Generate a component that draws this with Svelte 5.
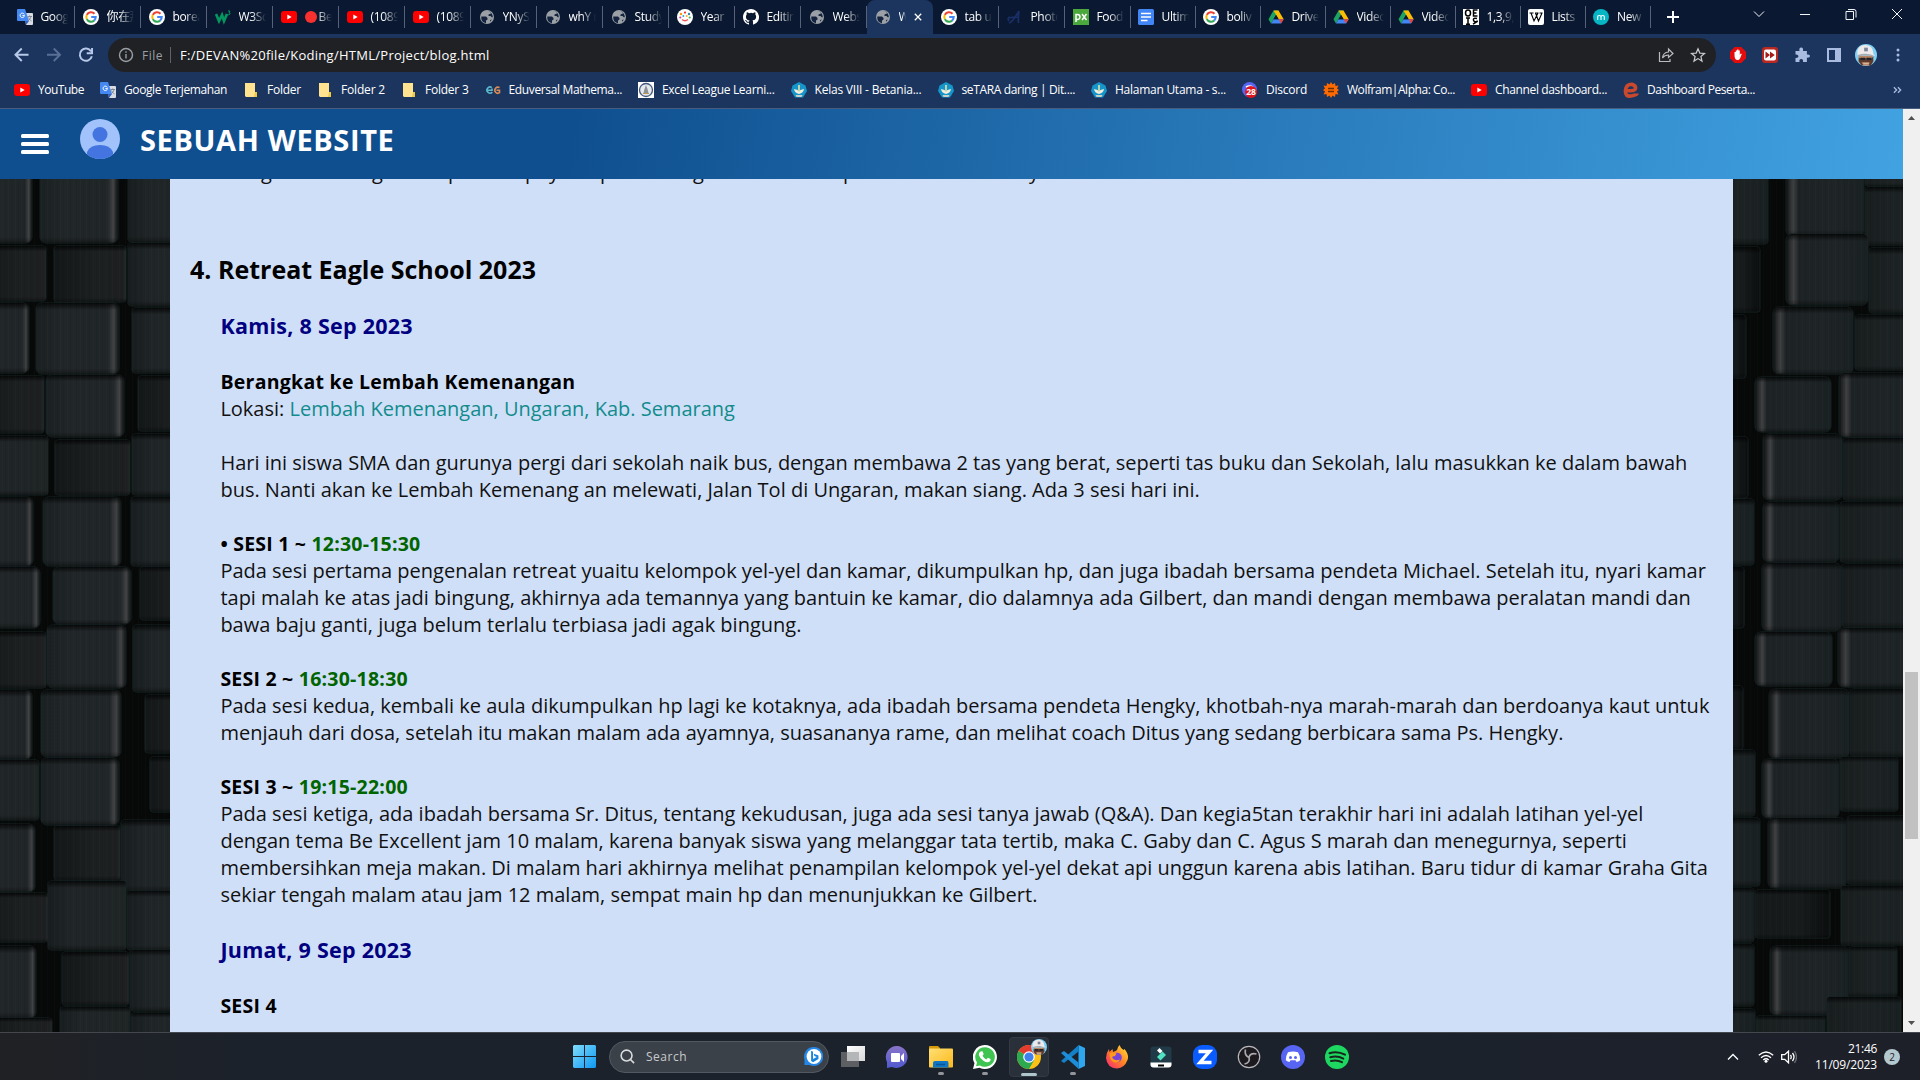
<script>
  // Spreads the letters of a line so that it spans the given width.
  function fit(node, width) {
    const natural = node.getBoundingClientRect().width;
    const count = node.textContent.length;
    if (width && count) node.style.letterSpacing = `${(width - natural) / count}px`;
  }

  const tabs = [
    ['translate', 'Google', 74.5], ['google', '你在那', 66], ['google', 'borea', 66], ['w3', 'W3Sch', 66],
    ['youtube', 'Be', 66, false, true], ['youtube', '(1089)', 66], ['youtube', '(1089)', 66], ['globe', 'YNySo', 66],
    ['globe', 'whY n', 66], ['globe', 'Study', 66], ['year', 'Year 2', 66], ['github', 'Editin', 66],
    ['globe', 'Webs', 66], ['globe', 'We', 66, true], ['google', 'tab un', 66], ['fontA', 'Photo', 66],
    ['px', 'Food', 66], ['docs', 'Ultim', 65], ['google', 'boliv', 65], ['drive', 'Drive', 65],
    ['drive', 'Video', 65], ['drive', 'Video', 65], ['oeis', '1,3,9,', 65], ['wiki', 'Lists', 65], ['m', 'New', 65.5]
  ];

  const bookmarks = [
    ['youtube', 'YouTube', 46], ['translate', 'Google Terjemahan', 103], ['folder', 'Folder', 34],
    ['folder', 'Folder 2', 44], ['folder', 'Folder 3', 43.5], ['edu', 'Eduversal Mathema...', 113.5],
    ['excel', 'Excel League Learni...', 112.5], ['tut', 'Kelas VIII - Betania...', 107],
    ['tut', 'seTARA daring | Dit....', 113.5], ['tut', 'Halaman Utama - s...', 111],
    ['disc28', 'Discord', 41], ['wolfram', 'Wolfram|Alpha: Co...', 108],
    ['youtube', 'Channel dashboard...', 112], ['e', 'Dashboard Peserta...', 108]
  ];

  // Letters of the line that scrolls under the header: [glyph, box width]
  const cut = [['', 41], ['g', 111], ['g', 76], ['p', 77], ['p', 24], ['y', 51], ['p', 93], ['g', 150], ['p', 186], ['y', 20]];

  const sessions = [
    { label: '• SESI 1 ~ ', time: '12:30-15:30', width: 200, lines: [
      ['Pada sesi pertama pengenalan retreat yuaitu kelompok yel-yel dan kamar, dikumpulkan hp, dan juga ibadah bersama pendeta Michael. Setelah itu, nyari kamar', 1485.5],
      ['tapi malah ke atas jadi bingung, akhirnya ada temannya yang bantuin ke kamar, dio dalamnya ada Gilbert, dan mandi dengan membawa peralatan mandi dan', 1470.5],
      ['bawa baju ganti, juga belum terlalu terbiasa jadi agak bingung.', 581]
    ] },
    { label: 'SESI 2 ~ ', time: '16:30-18:30', width: 187.5, lines: [
      ['Pada sesi kedua, kembali ke aula dikumpulkan hp lagi ke kotaknya, ada ibadah bersama pendeta Hengky, khotbah-nya marah-marah dan berdoanya kaut untuk', 1489],
      ['menjauh dari dosa, setelah itu makan malam ada ayamnya, suasananya rame, dan melihat coach Ditus yang sedang berbicara sama Ps. Hengky.', 1343]
    ] },
    { label: 'SESI 3 ~ ', time: '19:15-22:00', width: 187.5, lines: [
      ['Pada sesi ketiga, ada ibadah bersama Sr. Ditus, tentang kekudusan, juga ada sesi tanya jawab (Q&A). Dan kegia5tan terakhir hari ini adalah latihan yel-yel', 1423],
      ['dengan tema Be Excellent jam 10 malam, karena banyak siswa yang melanggar tata tertib, maka C. Gaby dan C. Agus S marah dan menegurnya, seperti', 1406.5],
      ['membersihkan meja makan. Di malam hari akhirnya melihat penampilan kelompok yel-yel dekat api unggun karena abis latihan. Baru tidur di kamar Graha Gita', 1487.5],
      ['sekiar tengah malam atau jam 12 malam, sempat main hp dan menunjukkan ke Gilbert.', 817]
    ] }
  ];

  // Background blocks: [left, right, top, bottom, look]; b bright, n plain, d dim
  const leftBlocks = [
    [-20,32,170,243,'b'],[40,118,170,243,'b'],[128,200,170,242,'n'],
    [-20,46,246,301,'d'],[54,126,246,302,'d'],[128,200,243,306,'n'],
    [-20,29,303,373,'b'],[132,200,308,373,'n'],[36,119,303,374,'b'],
    [-20,44,376,433,'d'],[138,200,376,431,'d'],[46,124,375,437,'b'],
    [-20,48,436,495,'n'],[55,130,440,495,'d'],[132,200,434,495,'n'],
    [-20,33,497,566,'b'],[43,121,497,566,'b'],[131,200,497,566,'n'],
    [-20,40,567,628,'b'],[53,131,567,624,'b'],[140,200,567,620,'d'],
    [-20,46,632,688,'d'],[47,126,625,688,'b'],[133,200,625,692,'n'],
    [-20,32,690,759,'b'],[145,200,695,753,'d'],[41,121,690,757,'b'],
    [-20,39,760,820,'n'],[150,200,757,812,'d'],[41,119,758,825,'b'],
    [-20,35,824,892,'b'],[54,120,826,880,'d'],[121,200,820,891,'n'],
    [-20,48,893,942,'d'],[48,126,881,950,'n'],[127,200,891,950,'n'],
    [-20,36,946,1018,'b'],[62,129,952,1005,'d'],[130,200,950,1011,'n'],
    [-20,52,1018,1060,'d'],[60,130,1007,1060,'n'],[131,200,1013,1060,'n']
  ];
  const rightBlocks = [
    [1715,1768,160,244,'n'],[1786,1864,160,236,'b'],[1865,1920,150,186,'n'],[1865,1920,187,245,'n'],
    [1715,1760,247,312,'d'],[1869,1920,248,313,'n'],[1786,1868,234,305,'b'],
    [1715,1746,315,378,'d'],[1855,1920,315,370,'n'],[1773,1853,307,374,'b'],
    [1755,1831,377,432,'b'],[1839,1920,373,437,'b'],
    [1715,1748,437,498,'d'],[1843,1920,438,500,'n'],[1763,1842,434,500,'b'],
    [1715,1754,499,565,'n'],[1840,1920,502,562,'n'],[1763,1839,502,562,'b'],
    [1715,1744,567,628,'d'],[1842,1920,564,627,'n'],[1762,1841,563,631,'b'],
    [1755,1832,632,686,'b'],[1838,1920,628,687,'b'],
    [1715,1743,686,750,'d'],[1850,1920,689,756,'n'],[1769,1849,689,758,'b'],
    [1715,1755,750,816,'n'],[1840,1898,757,811,'n'],[1762,1839,759,818,'b'],
    [1715,1760,818,886,'n'],[1847,1920,816,884,'n'],[1768,1846,818,888,'b'],
    [1715,1754,888,942,'n'],[1755,1830,890,938,'d'],[1841,1920,886,945,'n'],
    [1715,1754,944,1006,'n'],[1849,1897,947,996,'n'],[1770,1848,946,1015,'b'],
    [1715,1755,1009,1060,'n'],[1756,1825,1016,1060,'n'],[1827,1901,997,1060,'n']
  ];

  const apps = [
    ['taskview'], ['chat'], ['explorer', 'dot'], ['whatsapp', 'dot'], ['chrome', 'active'], ['vscode', 'dot'],
    ['firefox'], ['filmora'], ['zapp'], ['obs'], ['discord'], ['spotify']
  ];
</script>

{#snippet face()}
  <circle cx="12" cy="12" r="12" fill="#7fd0f5" />
  <path d="M4 13h15l1 6-4 4.500H8L4 19z" fill="#b98463" />
  <path d="M4 12v7l3 4h2l-2-3h9l-1 3.500h2l3-4.500v-6l-2 3-5-1-4 1-5-1z" fill="#5b3a2c" />
  <path d="M3 13C1 6 5 1 11 1s9 4 9 10l2 2-9-1z" fill="#eceaea" />
  <path d="M3 12c6-2 12-2 18 1v1c-6-2-12-2-18 0z" fill="#a9a9ae" />
  <rect x="10" y="4" width="4" height="4" fill="#7d8299" />
  <path d="M6 15h5v2.500H6zM13 15h5v2.500h-5z" fill="#20242e" />
  <path d="M9 20.500h6V22H9z" fill="#d7b59c" />
{/snippet}

{#snippet icon(name)}
  {#if name === 'translate'}
    <svg class="i16" viewBox="0 0 16 16"><path d="M7 4h8a1 1 0 0 1 1 1v10a1 1 0 0 1-1 1H9z" fill="#d9dde3" /><path d="M1 0h7l4 12H1a1 1 0 0 1-1-1V1a1 1 0 0 1 1-1z" fill="#4688f1" /><path d="M8 12h4l-3 4z" fill="#3162c4" /><path d="M7.3 5.400a2.200 2.200 0 1 0 .2 1.200H5.400" fill="none" stroke="#fff" stroke-width="1" /><path d="M10.500 7.500H15M12.700 6.500v1M14 7.500c-.5 2-1.500 3.200-2.500 4M11.500 8.500c.7 1.700 1.700 2.700 3 3.500" stroke="#6b7785" fill="none" stroke-width=".8" /></svg>
  {:else if name === 'google'}
    <svg class="i16" viewBox="0 0 16 16"><circle cx="8" cy="8" r="8" fill="#fff" /><g fill="none" stroke-width="2.100"><path d="M11.500 4.800A4.700 4.700 0 0 0 3.800 5.900" stroke="#ea4335" /><path d="M3.800 5.900a4.700 4.700 0 0 0 0 4.200" stroke="#fbbc05" /><path d="M3.800 10.100a4.700 4.700 0 0 0 7.300 1.500" stroke="#34a853" /><path d="M11.100 11.600A4.700 4.700 0 0 0 12.700 8H8.200" stroke="#4285f4" /></g></svg>
  {:else if name === 'w3'}
    <svg class="i16" viewBox="0 0 16 16"><path d="M1 5l3 7 3-6 2 6 3-7" fill="none" stroke="#04965f" stroke-width="2.700" /><path d="M13 2h2l-1 1.500q2 0 .5 2-1 .6-2 0" fill="none" stroke="#04965f" /></svg>
  {:else if name === 'youtube'}
    <svg class="i16" viewBox="0 0 16 16"><rect y="2" width="16" height="12" rx="3" fill="#f00" /><path d="M6.300 5.400v5.200L10.700 8z" fill="#fff" /></svg>
  {:else if name === 'globe'}
    <svg class="i16" viewBox="0 0 16 16"><circle cx="8" cy="8" r="7" fill="#9aa0a6" /><path d="M2.300 7.500H7l1.500 1.500v1.500L7 11.500v2.700C3.500 13.500 2 11 2.300 7.500zM8 2.200l3.500.6L12 4.500 9.500 5.500v1.500h2L13 8.500l.8-.5C13.800 5 12 2.500 8 2.200zM11 11l1.800-.5-1.500 2.200z" fill="#14233f" /></svg>
  {:else if name === 'year'}
    <svg class="i16" viewBox="0 0 16 16"><circle cx="8" cy="8" r="8" fill="#fff" /><circle cx="4" cy="5" r="1.200" fill="#f90" /><circle cx="8" cy="3.600" r="1.100" fill="#e33" /><circle cx="12" cy="5" r="1.200" fill="#38a" /><circle cx="3.300" cy="8.500" r="1.100" fill="#d3a" /><circle cx="12.700" cy="8.500" r="1.100" fill="#4b4" /><circle cx="6.300" cy="7" r="1" fill="#3ab" /><circle cx="9.700" cy="7" r="1" fill="#fa3" /><path d="M5 10.500q3 2.500 6 0" stroke="#e55" stroke-width="1.300" fill="none" /></svg>
  {:else if name === 'github'}
    <svg class="i16" viewBox="0 0 16 16"><path fill="#fff" d="M8 0C3.580 0 0 3.580 0 8c0 3.540 2.290 6.530 5.470 7.590.4.070.55-.17.55-.38v-1.490c-2.010.37-2.530-.49-2.690-.94-.09-.23-.48-.94-.82-1.130-.28-.15-.68-.52-.01-.53.63-.01 1.080.58 1.230.82.72 1.210 1.870.87 2.330.66.07-.52.28-.87.51-1.070-1.780-.2-3.640-.89-3.640-3.950 0-.87.31-1.590.82-2.150-.08-.2-.36-1.020.08-2.120 0 0 .67-.21 2.200.82a7.600 7.600 0 0 1 4 0c1.530-1.040 2.200-.82 2.200-.82.44 1.100.16 1.920.08 2.120.51.56.82 1.270.82 2.150 0 3.070-1.870 3.750-3.650 3.950.29.25.54.73.54 1.480v2.200c0 .21.15.46.55.38A8 8 0 0 0 8 0z" /></svg>
  {:else if name === 'fontA'}
    <svg class="i16" viewBox="0 0 16 16"><path d="M2 14C6 13 10 5 12 2q-1 6-.5 12M3 9q5-2 9 0M2 12q-2-3 1-4" fill="none" stroke="#1a2e68" stroke-width="1.700" /></svg>
  {:else if name === 'px'}
    <svg class="i16" viewBox="0 0 16 16"><rect width="16" height="16" fill="#4ba83c" /><path d="M3 13V5.500h1.500a2 2 0 0 1 0 5H3M9 5l4.500 6M13.500 5L9 11" fill="none" stroke="#fff" stroke-width="1.500" /></svg>
  {:else if name === 'docs'}
    <svg class="i16" viewBox="0 0 16 16"><rect width="16" height="16" rx="1.500" fill="#4285f4" /><path d="M3 4.500h10M3 8h10M3 11.500h6.500" stroke="#fff" stroke-width="1.600" /></svg>
  {:else if name === 'drive'}
    <svg class="i16" viewBox="0 0 16 16"><path d="M5.500 1.500h5L8 6 3 14.500.500 10.200z" fill="#1ea362" /><path d="M5.500 1.500h5L15.700 10.300h-5z" fill="#fbbc04" /><path d="M5.500 10.300h10.200L13 14.500H3z" fill="#4285f4" /><path d="M10.700 10.300h5L13 14.500z" fill="#ea4335" /><path d="M8 6l2.500 4.300h-5z" fill="#0b1931" /></svg>
  {:else if name === 'oeis'}
    <svg class="i16" viewBox="0 0 16 16"><rect width="16" height="16" fill="#fff" /><g fill="none" stroke="#000" stroke-width="1.500"><ellipse cx="5" cy="4" rx="2.500" ry="3" /><path d="M14.500 1h-4v6h4M10.500 4h3M3 9h4M5 9v6.500M3 15.300h4M14 9.500q-4-1-3.500 1.500t3 1.500-3.500 2.700" /></g></svg>
  {:else if name === 'wiki'}
    <svg class="i16" viewBox="0 0 16 16"><rect width="16" height="16" rx="2" fill="#fff" /><path d="M1.500 4h4M7 4h3.500M11.500 4h3M3 4l3 8 4-8M7.500 4l3 8 3.500-8" fill="none" stroke="#000" stroke-width="1.100" /></svg>
  {:else if name === 'm'}
    <svg class="i16" viewBox="0 0 16 16"><circle cx="8" cy="8" r="8" fill="#06b6c4" /><path d="M4.700 11V6.500M4.700 8q0-1.500 1.700-1.500T8 8v3M8 8q0-1.500 1.700-1.500T11.300 8v3" stroke="#fff" stroke-width="1.100" fill="none" /></svg>
  {:else if name === 'folder'}
    <svg class="i16" viewBox="0 0 16 16"><path d="M2 1h10v9h2v5H3L2 14z" fill="#ffe391" /><path d="M12 10h2v5h-3z" fill="#f0c848" /></svg>
  {:else if name === 'edu'}
    <svg class="i16" viewBox="0 0 16 16"><g fill="none" stroke-width="1.600"><path d="M6.800 5.700A3 3 0 1 0 7.300 10M2 8.200h5V6.500" stroke="#5bb8cc" /><path d="M14.500 5.700a3 3 0 1 0 0 5V8.200h-3" stroke="#d98c57" /></g></svg>
  {:else if name === 'excel'}
    <svg class="i16" viewBox="0 0 16 16"><rect width="16" height="16" fill="#fff" /><circle cx="8" cy="8" r="6.500" fill="#e6e9ee" stroke="#41577c" stroke-width="1.300" /><path d="M8 3l1.500 4 1 4h-5l1-4z" fill="#8d9297" /><path d="M5 11.500h6" stroke="#b59b57" /></svg>
  {:else if name === 'tut'}
    <svg class="i16" viewBox="0 0 16 16"><path d="M8 0l6.500 3.500L16 9l-4 6.500H4L0 9l1.500-5.500z" fill="#1595c9" /><path d="M3 7l3.500 1L8 9.500 9.500 8 13 7q-.5 4-5 5Q3.500 11 3 7z" fill="#f3efdc" /><path d="M8 3v6" stroke="#f4e9a0" stroke-width="1.500" /><path d="M4.500 13h7l-1 2h-5z" fill="#c9d2c8" /></svg>
  {:else if name === 'disc28'}
    <svg class="i16" viewBox="0 0 16 16"><circle cx="7.500" cy="7.500" r="7.500" fill="#5865f2" /><path d="M4 5q3.500-2 7 0" stroke="#fff" stroke-width="1.500" fill="none" /><circle cx="9" cy="10" r="6" fill="#e0141e" /><text x="9" y="13" class="badge-text">28</text></svg>
  {:else if name === 'wolfram'}
    <svg class="i16" viewBox="0 0 16 16"><path d="M8 0l1.500 2.500L12 1l.500 3 3-.500L14 6.500 16 8l-2 1.500 1.500 3-3-.500L12 15l-2.500-1.500L8 16l-1.500-2.500L4 15l-.500-3-3 .500L2 9.500 0 8l2-1.500-1.500-3 3 .500L4 1l2.500 1.500z" fill="#ff6a00" /><path d="M5 6.500h6M5 9.500h6" stroke="#6b3200" stroke-width="1.300" /></svg>
  {:else if name === 'e'}
    <svg class="i16" viewBox="0 0 16 16"><path d="M4 8.500q8 1 8.500-2T9 2.200Q3 2 2.500 8.500T8 14t6-2.500" fill="none" stroke="#c9482e" stroke-width="3.600" /></svg>
  {/if}
{/snippet}

{#snippet app(name)}
  <svg class="i24" viewBox="0 0 24 24">
    {#if name === 'taskview'}
      <rect x="0" y="7" width="18" height="15" fill="#5d5f63" /><rect x="6" y="1" width="18" height="15" fill="url(#white-pane)" /><rect x="6" y="7" width="12" height="9" fill="#b5b6b8" />
    {:else if name === 'chat'}
      <path d="M12 1a11 11 0 1 1-5 21l-5 1V17A11 11 0 0 1 12 1z" fill="url(#violet)" /><rect x="6" y="8" width="9" height="9" rx="1" fill="#fff" /><path d="M16 11l3-3v9l-3-3z" fill="#fff" />
    {:else if name === 'explorer'}
      <path d="M0 2q0-1 1-1h8l2 2v4H0z" fill="#d79a0b" /><rect y="3.500" width="24" height="19" rx="1" fill="url(#yellow)" /><path d="M4 22.500V18q0-2 2-2h12q1.500 0 1.500 2v4.500z" fill="#0f75c5" /><path d="M7 19.500h9" stroke="#0a5594" stroke-width="1.500" />
    {:else if name === 'whatsapp'}
      <path d="M12 0A12 12 0 1 1 6.500 22.700L0 24l1.500-6A12 12 0 0 1 12 0z" fill="#fff" /><path d="M12 2.200a9.800 9.800 0 1 1-5 18.200L3 21.300 4 17.500A9.800 9.800 0 0 1 12 2.200z" fill="#3fc351" /><path d="M8 6.200l1.700.3 1 2.700-1.200 1.600q1.300 2.500 3.800 3.600l1.600-1.600 2.700 1.300q.2 2-1.200 2.700-2.500 1.200-6-1.100-3.700-2.500-4.600-5.700-.4-2.500 2.200-3.800z" fill="#fff" />
    {:else if name === 'chrome'}
      <circle cx="12" cy="12" r="12" fill="#fbc116" /><path d="M12 12L1.600 6A12 12 0 0 1 22.400 6z" fill="#e33b2e" /><path d="M1.600 6A12 12 0 0 0 12 24l5.200-9L12 12z" fill="#2da94f" /><circle cx="12" cy="12" r="5.800" fill="#fff" /><circle cx="12" cy="12" r="4.600" fill="#3f82ee" />
    {:else if name === 'vscode'}
      <path d="M17.500 0L24 3v18l-6.500 3z" fill="#2fa7ee" /><path d="M17.500 0v6.500L3 18 0 16 16 1.500z" fill="#1480c8" /><path d="M17.500 24v-6.500L3 6 0 8l16 14.500z" fill="#1d8dd8" />
    {:else if name === 'firefox'}
      <path d="M14.500 0q1 3 4 5l1-1q5 6 3 11-3 8-10.500 8.500Q2 23 1 13q0-5 3-9l.5 3 3-3 .5 3q3-1 4-2 .5-3 2.500-5z" fill="url(#fire)" /><circle cx="12" cy="12.500" r="4.800" fill="#7a45d6" /><path d="M4.500 8.500q4-2 7 0l-1.500 2.500q-3 0-3 1.500 2.500 4 8 2-1 3.500-5 3-5.500-1-5.500-9z" fill="#ff9a1c" />
    {:else if name === 'filmora'}
      <rect x="1.500" y="1.500" width="21" height="21" rx="3" fill="#203a48" /><path d="M8 12l5.500-5.500 3.500 3.500-5.500 5.500z" fill="#50e3c2" /><path d="M10.500 3l3 3-2.500 2.500-3-3z" fill="#fff" /><path d="M1.500 17.500h21v2q0 3-3 3h-15q-3 0-3-3z" fill="#fff" /><path d="M9 20.500h6" stroke="#000" stroke-width="2" />
    {:else if name === 'zapp'}
      <rect width="24" height="24" rx="9" fill="#0b5cff" /><path d="M5.500 6.500h11L7 17.500h11.500" fill="none" stroke="#fff" stroke-width="3.400" />
    {:else if name === 'obs'}
      <circle cx="12" cy="12" r="10.700" fill="#1c1a1e" stroke="#bab8bc" stroke-width="1.200" /><path d="M12 12.500Q7 10 8.500 4.500M12 12.500q1-5 7.500-3.500M12 12.500q1.500 5-4.500 6.500" stroke="#aaa8ac" stroke-width="1.700" fill="none" />
    {:else if name === 'discord'}
      <circle cx="12" cy="12" r="12" fill="#5865f2" /><path d="M7 7.300q5-1.600 10 0 2.500 4 2.200 8-2 1.600-3.700 1.700l-1-1.700h-5l-1 1.700q-1.700-.1-3.700-1.700-.3-4 2.200-8z" fill="#fff" /><circle cx="9.500" cy="12.500" r="1.500" fill="#5865f2" /><circle cx="14.500" cy="12.500" r="1.500" fill="#5865f2" />
    {:else if name === 'spotify'}
      <circle cx="12" cy="12" r="12" fill="#1ed760" /><path d="M4.500 8.200q8-2.400 15.500 1.500M5.300 12.200q7-2 13 1.400M6 16q6-1.600 11 1.200" fill="none" stroke="#17251c" stroke-width="2" stroke-linecap="round" />
    {/if}
  </svg>
{/snippet}

<div class="screen">
  <div class="tabstrip">
    {#each tabs as [name, title, width, active, recording]}
      <div class="tab" class:active style:width="{width}px">
        <div class="tab-body">
          {@render icon(name)}
          <span class="tab-title">{#if recording}<i class="rec"></i>{/if}{title}</span>
          {#if active}
            <svg class="tab-close" viewBox="0 0 10 10"><path d="M1 1l8 8M9 1L1 9" /></svg>
          {/if}
        </div>
      </div>
    {/each}
    <svg class="plus" viewBox="0 0 12 12"><path d="M6 0v12M0 6h12" /></svg>
    <div class="controls">
      <svg viewBox="0 0 12 12"><path d="M1 3.500l5 5 5-5" /></svg>
      <svg viewBox="0 0 12 12"><path d="M1 6.500h10" /></svg>
      <svg viewBox="0 0 12 12"><path d="M1 3.500h7.500v8H1zM3 1.500h6q2 0 2 2v6" /></svg>
      <svg viewBox="0 0 12 12"><path d="M1 1l10 10M11 1L1 11" /></svg>
    </div>
  </div>

  <div class="toolbar">
    <div class="nav">
      <svg viewBox="0 0 16 16"><path d="M15 8H2M8 1.500L1.500 8 8 14.500" /></svg>
      <svg viewBox="0 0 16 16" class="off"><path d="M1 8h13M8 1.500L14.500 8 8 14.500" /></svg>
      <svg viewBox="0 0 16 16"><path d="M13.500 4.500A6.300 6.300 0 1 0 14.300 9.500M14.500 1v5.500H9" /></svg>
    </div>
    <div class="omnibox">
      <svg class="info" viewBox="0 0 16 16"><circle cx="8" cy="8" r="6.500" /><path d="M8 7v4.500M8 4.300v1.500" /></svg>
      <span class="scheme"><span use:fit={21}>File</span></span>
      <span class="bar"></span>
      <span class="url"><span use:fit={309.5}>F:/DEVAN%20file/Koding/HTML/Project/blog.html</span></span>
      <svg class="line-icon" viewBox="0 0 16 16"><path d="M1.500 5v9.500H12V12M4.500 11q.5-5.500 6-6V2l4.500 4.500-4.500 4V8q-4 0-6 3z" /></svg>
      <svg class="line-icon" viewBox="0 0 16 16"><path d="M8 1.800l1.800 4.300 4.700.4-3.600 3 1.100 4.600L8 11.600l-4 2.500 1.100-4.600-3.600-3 4.700-.4z" /></svg>
    </div>
    <div class="extensions">
      <svg viewBox="0 0 16 16"><path d="M4.700 0h6.600L16 4.700v6.600L11.300 16H4.700L0 11.300V4.700z" fill="#e40d0d" /><path d="M4.500 8V5h1.300v2V3.500h1.300v3-4h1.400v4-3h1.300V8l1-1.500 1 .5-1.800 4.500Q9 13.500 7 13q-2.500-.5-2.500-5z" fill="#fff" /></svg>
      <svg viewBox="0 0 16 16"><rect width="16" height="16" rx="3" fill="#ba2822" /><rect x="2" y="2.500" width="12" height="11" rx="2" fill="#fff" /><path d="M3.500 4.500L8 8l-4.500 3.500zM8 4.500L12.800 8 8 11.500z" fill="#a51b18" /></svg>
      <svg viewBox="0 0 16 16"><path d="M1.500 4h4q-.8-3.500 1.700-3.500T8.900 4h4v3.500Q16 7 16 9t-3.100 1.600V15H9q.5-3-1.800-3t-1.700 3h-4v-4q3 .2 3-1.700T1.500 7.600z" fill="#a9bce0" /></svg>
      <svg viewBox="0 0 16 16"><path d="M1 1h14v14H1zM3 3v10h6V3z" fill="#a9bce0" fill-rule="evenodd" /></svg>
      <svg class="profile" viewBox="0 0 24 24">{@render face()}</svg>
      <svg viewBox="0 0 16 16"><g fill="#a9bce0"><circle cx="8" cy="3" r="1.500" /><circle cx="8" cy="8" r="1.500" /><circle cx="8" cy="13" r="1.500" /></g></svg>
    </div>
  </div>

  <div class="bookmarks">
    {#each bookmarks as [name, title, width]}
      <div class="bookmark">
        {@render icon(name)}
        <span class="bm-title" style:width="{width}px"><span use:fit={width}>{title}</span></span>
      </div>
    {/each}
    <svg class="more" viewBox="0 0 10 8"><path d="M1 1l3 3-3 3M5.500 1l3 3-3 3" /></svg>
  </div>

  <div class="window">
    <div class="page">
      <header>
        <div class="burger"><i></i><i></i><i></i></div>
        <svg class="avatar" viewBox="0 0 40 40"><defs><clipPath id="round"><circle cx="20" cy="20" r="20" /></clipPath></defs><circle cx="20" cy="20" r="20" fill="#a1c2fb" /><g clip-path="url(#round)" fill="#4374e0"><circle cx="20" cy="15.500" r="7.500" /><path d="M7 40v-7q3-7 13-7t13 7v7z" /></g></svg>
        <h1><span use:fit={254.5}>SEBUAH WEBSITE</span></h1>
      </header>
      <div class="stage">
        <svg class="wall" viewBox="0 179 1903 853">
          <defs>
            <linearGradient id="Lb"><stop offset="0" stop-color="#1b2122" /><stop offset=".3" stop-color="#212628" /><stop offset=".86" stop-color="#202527" /><stop offset=".94" stop-color="#414345" /><stop offset="1" stop-color="#0d1011" /></linearGradient>
            <linearGradient id="Ln"><stop offset="0" stop-color="#181e1f" /><stop offset=".3" stop-color="#202527" /><stop offset="1" stop-color="#1f2425" /></linearGradient>
            <linearGradient id="Ld"><stop offset="0" stop-color="#141718" /><stop offset=".6" stop-color="#1c2021" /><stop offset=".96" stop-color="#1d1f20" /><stop offset="1" stop-color="#2b2c2d" /></linearGradient>
            <linearGradient id="Rb"><stop offset="0" stop-color="#0c0f10" /><stop offset=".09" stop-color="#3f4143" /><stop offset=".16" stop-color="#1d2224" /><stop offset=".6" stop-color="#1f2527" /><stop offset="1" stop-color="#1a2122" /></linearGradient>
            <linearGradient id="Rn"><stop offset="0" stop-color="#181d1e" /><stop offset=".5" stop-color="#1d2324" /><stop offset="1" stop-color="#192021" /></linearGradient>
            <linearGradient id="Rd"><stop offset="0" stop-color="#151919" /><stop offset=".6" stop-color="#171b1c" /><stop offset="1" stop-color="#0c0e0e" /></linearGradient>
            <linearGradient id="shade" x2="0" y2="1"><stop offset="0" stop-opacity=".75" /><stop offset=".1" stop-opacity="0" /><stop offset=".92" stop-opacity="0" /><stop offset="1" stop-opacity=".35" /></linearGradient>
            <pattern id="brush" width="13" height="60" patternUnits="userSpaceOnUse"><path d="M2.500 0v60M8.500 0v60" stroke="#fff" stroke-opacity=".012" /><path d="M5.500 0v60M11.500 0v60" stroke="#000" stroke-opacity=".05" /></pattern>
          </defs>
          <rect y="179" width="1903" height="853" fill="#070909" />
          {#each [['L', leftBlocks], ['R', rightBlocks]] as [side, blocks]}
            {#each blocks as [l, r, t, b, look]}
              <rect x={l} y={t} width={r - l} height={b - t} rx={look === 'b' ? 6 : 3} fill="url(#{side}{look})" stroke="#172223" stroke-width="1" />
              <rect x={l} y={t} width={r - l} height={b - t} rx={look === 'b' ? 6 : 3} fill="url(#shade)" />
            {/each}
          {/each}
          <rect y="179" width="1903" height="853" fill="url(#brush)" />
        </svg>
        <article>
          <div class="cut">
            {#each cut as [glyph, width]}<span style:width="{width}px">{glyph}</span>{/each}
          </div>
          <h2><span use:fit={346}>4. Retreat Eagle School 2023</span></h2>
          <section>
            <h3><span use:fit={192.5}>Kamis, 8 Sep 2023</span></h3>
            <p class="block">
              <b use:fit={355}>Berangkat ke Lembah Kemenangan</b>
              <span use:fit={514.5}>Lokasi: <em>Lembah Kemenangan, Ungaran, Kab. Semarang</em></span>
            </p>
            <p class="block">
              <span use:fit={1467}>Hari ini siswa SMA dan gurunya pergi dari sekolah naik bus, dengan membawa 2 tas yang berat, seperti tas buku dan Sekolah, lalu masukkan ke dalam bawah</span>
              <span use:fit={979.5}>bus. Nanti akan ke Lembah Kemenang an melewati, Jalan Tol di Ungaran, makan siang. Ada 3 sesi hari ini.</span>
            </p>
            {#each sessions as s}
              <p class="block">
                <b use:fit={s.width}>{s.label}<i class="time">{s.time}</i></b>
                {#each s.lines as [line, width]}<span use:fit={width}>{line}</span>{/each}
              </p>
            {/each}
            <h3 class="next"><span use:fit={191.5}>Jumat, 9 Sep 2023</span></h3>
            <p class="block"><b use:fit={56.5}>SESI 4</b></p>
          </section>
        </article>
      </div>
    </div>
    <div class="scrollbar">
      <svg viewBox="0 0 7 4"><path d="M3.500 0L7 4H0z" /></svg>
      <div class="thumb"></div>
      <svg viewBox="0 0 7 4"><path d="M3.500 4L7 0H0z" /></svg>
    </div>
  </div>

  <div class="taskbar">
    <svg class="defs" width="0" height="0">
      <defs>
        <linearGradient id="win" x1="0" y1="0" x2="1" y2="1"><stop offset="0" stop-color="#7fdcfb" /><stop offset="1" stop-color="#0e97f3" /></linearGradient>
        <linearGradient id="white-pane" x2="1" y2="1"><stop offset="0" stop-color="#fff" /><stop offset="1" stop-color="#d8d8d8" /></linearGradient>
        <linearGradient id="violet" x2="0" y2="1"><stop offset="0" stop-color="#8a74c8" /><stop offset="1" stop-color="#5058cf" /></linearGradient>
        <linearGradient id="yellow" x2="1" y2="1"><stop offset="0" stop-color="#ffdf74" /><stop offset="1" stop-color="#fdb81c" /></linearGradient>
        <linearGradient id="fire" x1="1" y1="0" x2="0" y2="1"><stop offset="0" stop-color="#ffe838" /><stop offset=".5" stop-color="#ff8026" /><stop offset="1" stop-color="#f5217c" /></linearGradient>
      </defs>
    </svg>
    <div class="task start"><svg class="i23" viewBox="0 0 23 23"><path d="M1 0h10v11H0V1zM12 0h10l1 1v10H12zM0 12h11v11H1l-1-1zM12 12h11v10l-1 1H12z" fill="url(#win)" /></svg></div>
    <div class="search">
      <svg class="glass" viewBox="0 0 16 16"><circle cx="7" cy="7" r="5.800" /><path d="M11.200 11.200L15 15" /></svg>
      <span class="search-label"><span use:fit={41}>Search</span></span>
      <svg class="bing" viewBox="0 0 20 20"><path d="M10 0a10 10 0 1 1-4 19H.5v-6A10 10 0 0 1 10 0z" fill="#2487e8" /><circle cx="10.500" cy="10" r="7.800" fill="#fff" /><path d="M7.500 4l2 1v7.500l4-2-2.500-1-.800-2.500 5 2v3.500L9.500 16l-2-1.200z" fill="#1683dd" /></svg>
    </div>
    {#each apps as [name, state]}
      <div class="task {state ?? ''}">
        {@render app(name)}
        {#if state === 'active'}<svg class="mini" viewBox="0 0 24 24">{@render face()}</svg>{/if}
        {#if state}<i class="mark"></i>{/if}
      </div>
    {/each}
    <div class="tray">
      <svg class="up" viewBox="0 0 12 8"><path d="M1 6.500l5-5 5 5" /></svg>
      <svg class="wifi" viewBox="0 0 16 12"><path d="M.800 4.300Q8-2.300 15.200 4.300M3 6.800q5-4.600 10 0M5.300 9q2.700-2.400 5.400 0" /><circle cx="8" cy="10.300" r="1.500" /></svg>
      <svg class="sound" viewBox="0 0 16 14"><path d="M.700 4.700h3L7.500 1.200v11.600L3.700 9.300h-3zM9.500 4.800q1.500 2.200 0 4.400M11.500 3q3 4 0 8" /><path class="faint" d="M13.500 1.200q4 5.800 0 11.600" /></svg>
      <div class="clock"><span use:fit={29}>21:46</span><span use:fit={62}>11/09/2023</span></div>
      <div class="count">2</div>
    </div>
  </div>
</div>

<style>
  :global(body) { margin: 0; overflow: hidden; }
  .screen { width: 1920px; height: 1080px; display: flex; flex-direction: column; overflow: hidden; font-family: "Open Sans", "Noto Sans CJK SC", sans-serif; font-size: 12px; color: #fff; }
  svg { display: block; flex: none; }
  .i16 { width: 16px; height: 16px; }
  .i23 { width: 23px; height: 23px; }
  .i24 { width: 24px; height: 24px; }

  .tabstrip { height: 34px; flex: none; display: flex; background: #0a1931; }
  .tab { box-sizing: border-box; height: 34px; flex: none; display: flex; justify-content: flex-end; align-items: center; border-right: 1px solid #4a566b; border-image: linear-gradient(transparent 20%, #56617a 20% 80%, transparent 80%) 1; }
  .tab-body { width: 57px; height: 34px; display: flex; align-items: center; gap: 8px; }
  .tab-title { flex: 1; height: 18px; line-height: 18px; overflow: hidden; white-space: nowrap; letter-spacing: -0.35px; margin-right: 6px; mask-image: linear-gradient(90deg, #000 45%, transparent); }
  .rec { display: inline-block; width: 12px; height: 12px; margin: 0 2px 0 0; border-radius: 6px; background: #f8312f; vertical-align: -2px; }
  .tab.active { background: #1b355e; border-radius: 8px 8px 0 0; border-image: none; border-color: transparent; }
  .tab-close { width: 8px; height: 8px; margin-right: 10px; fill: none; stroke: #fff; stroke-width: 1.6; }
  .tab.active .tab-title { margin-right: 0; flex: none; width: 7px; }
  .plus { width: 12px; height: 12px; margin: 11px 0 0 16px; fill: none; stroke: #fff; stroke-width: 2; }
  .controls { margin-left: auto; display: flex; gap: 34px; padding: 8px 17px 0 0; }
  .controls svg { width: 12px; height: 12px; fill: none; stroke: #f2f4f8; stroke-width: 1; }

  .toolbar { height: 42px; flex: none; display: flex; align-items: center; background: #1b355e; }
  .nav { width: 94px; padding-left: 14px; display: flex; gap: 16.5px; }
  .nav svg { width: 15.500px; height: 15.500px; fill: none; stroke: #b7c8e8; stroke-width: 2; }
  .nav .off { stroke: #5a6f95; }
  .omnibox { box-sizing: border-box; width: 1608px; height: 34px; flex: none; border-radius: 17px; background: #202124; display: flex; align-items: center; padding: 0 10px; }
  .info { width: 16px; height: 16px; fill: none; stroke: #9aa0a6; stroke-width: 1.4; }
  .scheme { width: 21px; margin-left: 8px; color: #9aa0a6; white-space: nowrap; }
  .scheme span, .url span, .bm-title span, .search-label span, .clock span { display: inline-block; white-space: nowrap; }
  .bar { width: 1px; height: 16px; background: #5f6368; margin: 0 9px 0 7px; }
  .url { flex: 1; font-size: 13px; }
  .line-icon { width: 16px; height: 16px; margin-left: 16px; fill: none; stroke: #b8bbbf; stroke-width: 1.2; }
  .omnibox .line-icon:last-child { stroke: #c9cbd0; }
  .extensions { display: flex; gap: 16px; margin-left: 14px; align-items: center; }
  .extensions svg { width: 16px; height: 16px; }
  .extensions .profile { width: 22px; height: 22px; margin: 0 -3px; }

  .bookmarks { box-sizing: border-box; height: 33px; flex: none; display: flex; gap: 16px; padding: 0 18px 4px 14px; align-items: center; background: #1b355e; border-bottom: 1px solid #485d7e; }
  .bookmark { display: flex; gap: 8px; align-items: center; flex: none; }
  .bm-title { line-height: 16px; white-space: nowrap; }
  .more { width: 9px; height: 8px; margin-left: auto; fill: none; stroke: #a9bce0; stroke-width: 1.500; }

  .window { height: 923px; flex: none; display: flex; }
  .page { width: 1903px; display: flex; flex-direction: column; }
  header { box-sizing: border-box; height: 70px; flex: none; display: flex; padding-left: 21px; background: linear-gradient(100deg, #0f4f8f 30%, #41a2e2); }
  .burger { width: 28px; margin: 25px 31px 0 0; display: flex; flex-direction: column; gap: 4px; }
  .burger i { height: 4px; border-radius: 1.500px; background: #fff; }
  .avatar { width: 40px; height: 40px; margin: 10px 20px 0 0; }
  h1, h2, h3, p { margin: 0; }
  h1 span, h2 span, h3 span { display: inline-block; white-space: nowrap; }
  h1 { font-size: 29px; line-height: 38px; font-weight: 700; margin-top: 12px; }
  .stage { height: 853px; display: grid; overflow: hidden; }
  .wall, article { grid-area: 1 / 1; }
  .wall { width: 1903px; height: 853px; }
  article { box-sizing: border-box; z-index: 1; width: 1563px; height: 853px; margin-left: 170px; padding-left: 20px; overflow: hidden; background: #d0dff8; color: #111; font-size: 20px; line-height: 27px; }
  .cut { display: flex; height: 27px; margin: -21px 0 66px; padding-left: 30px; }
  h2 { font-size: 25px; line-height: 36px; font-weight: 700; color: #000; }
  section { padding: 24px 0 0 30.400px; }
  h3 { font-size: 21.500px; line-height: 30px; font-weight: 700; color: #000080; }
  .block { display: flex; flex-direction: column; align-items: flex-start; margin-top: 27px; white-space: nowrap; }
  .block b { font-weight: 700; font-size: 19.500px; color: #000; white-space: pre; }
  .block em { font-style: normal; color: #128c8c; }
  .time { font-style: normal; color: #006400; }
  .next { margin-top: 27px; }

  .scrollbar { width: 17px; background: #f0f0f0; display: flex; flex-direction: column; align-items: center; padding: 7px 0; box-sizing: border-box; }
  .scrollbar svg { width: 7px; height: 4px; fill: #505050; }
  .thumb { width: 13px; height: 167px; margin: 552px 0 auto; background: #c1c1c1; }

  .taskbar { box-sizing: border-box; height: 48px; flex: none; display: flex; align-items: center; padding-left: 562px; background: linear-gradient(90deg, #202124, #1b222c 15% 70%, #1e2029); border-top: 1px solid #44474d; }
  .defs { position: absolute; }
  .task { position: relative; width: 44px; height: 47px; flex: none; display: flex; align-items: center; justify-content: center; }
  .start { margin-right: 1px; }
  .mark { position: absolute; left: 19px; bottom: 5px; width: 6px; height: 3px; border-radius: 2px; background: #92959a; }
  .task.active { width: 38px; height: 38px; margin: 0 2px; border: 1px solid #343a43; border-radius: 4px; background: #2a3039; }
  .active .mark { left: 11px; bottom: 0; width: 16px; background: #b0c6cd; }
  .mini { position: absolute; left: 21px; top: 1px; width: 16px; height: 16px; }
  .search { box-sizing: border-box; width: 220px; height: 32px; margin: 0 2px; flex: none; display: flex; align-items: center; padding: 0 5px 0 10px; border-radius: 16px; border: 1px solid #535861; background: #3b4149; }
  .glass { width: 15px; height: 15px; fill: none; stroke: #dadde0; stroke-width: 1.700; }
  .search-label { flex: 1; margin-left: 11px; color: #c7cacd; }
  .bing { width: 19px; height: 19px; }
  .tray { margin-left: auto; display: flex; align-items: center; padding-right: 20px; }
  .tray svg { fill: none; stroke: #fff; stroke-width: 1.300; }
  .up { width: 12px; height: 8px; margin-right: 19px; }
  .wifi { width: 16px; height: 12px; margin-right: 7px; }
  .wifi circle { fill: #fff; stroke: none; }
  .sound { width: 16px; height: 14px; margin-right: 17px; }
  .sound .faint { stroke: #6a6e75; }
  .clock { width: 63px; display: flex; flex-direction: column; align-items: flex-end; line-height: 16px; font-size: 12px; }
  .count { width: 16px; height: 16px; margin-left: 7px; border-radius: 8px; background: #b3c8cf; color: #1c2229; font-size: 10px; line-height: 16px; text-align: center; }
  .badge-text { font-family: "Open Sans", sans-serif; font-size: 8.500px; font-weight: 700; fill: #fff; text-anchor: middle; }
</style>
